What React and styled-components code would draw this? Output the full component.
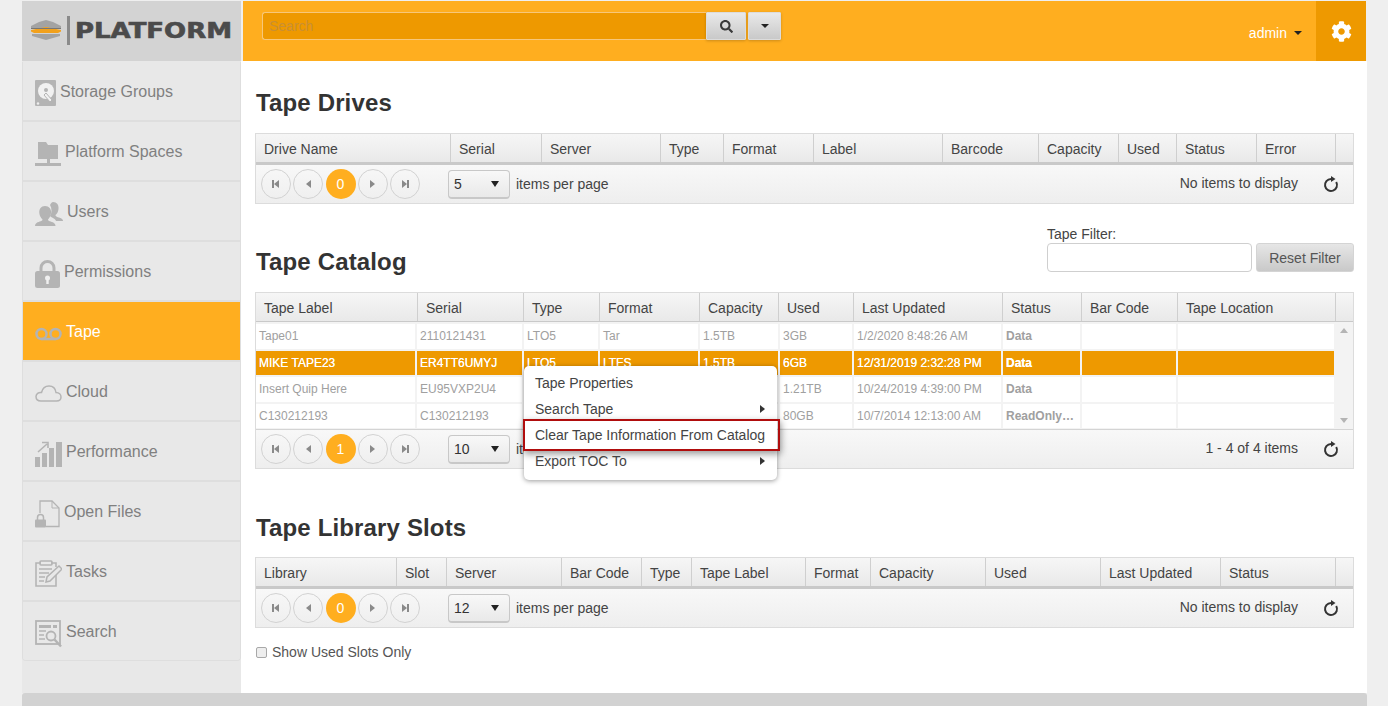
import React from "react";
import styled, { createGlobalStyle } from "styled-components";
import { FaSearch, FaCog } from "react-icons/fa";

const Global = createGlobalStyle`
  html, body { margin: 0; padding: 0; height: 100%; overflow: hidden; }
  body { background: #efefef; font-family: "Liberation Sans", Arial, sans-serif; color: #333; }
  * { box-sizing: border-box; }
`;

const Shell = styled.div`
  display: grid;
  grid-template-columns: 219px 1fr;
  grid-template-rows: 60px 632px 13px;
  width: 1345px;
  height: 706px;
  margin-left: 22px;
  padding-top: 1px;
`;
const LogoBar = styled.div`
  background: #d3d3d3;
  display: flex;
  align-items: center;
  padding-left: 7px;
`;
const TopBar = styled.header`
  margin: 0 1px 0 2px;
  background: #ffae1f;
  display: flex;
  align-items: flex-start;
  padding-left: 19px;
`;
const SearchInput = styled.input`
  width: 444px;
  height: 28px;
  margin-top: 11px;
  background: #ee9900;
  border: 1px solid #f7c77a;
  border-right: 0;
  border-radius: 3px 0 0 3px;
  padding: 0 6px;
  font: 14px "Liberation Sans", Arial, sans-serif;
  outline: none;
  &::placeholder { color: #c98f33; opacity: 1; }
`;
const BarButton = styled.button`
  width: ${(p) => p.$w}px;
  height: 28px;
  margin: 11px ${(p) => p.$mr || 0}px 0 0;
  padding: 0;
  border: 1px solid #dcdcdc;
  border-radius: 1px;
  background: linear-gradient(#e9e9e9, #c9c9c9);
  box-shadow: 0 1px 3px rgba(0, 0, 0, 0.2);
  display: flex;
  align-items: center;
  justify-content: center;
  color: #3a3a3a;
`;
const Caret = styled.span`
  display: inline-block;
  width: 0;
  height: 0;
  border-left: 4px solid transparent;
  border-right: 4px solid transparent;
  border-top: 4px solid ${(p) => p.$c || "#222"};
`;
const Spacer = styled.div`
  flex: 1;
`;
const UserMenu = styled.div`
  height: 60px;
  display: flex;
  align-items: center;
  gap: 7px;
  padding-top: 4px;
  margin-right: 14px;
  color: #fff;
  font-size: 14px;
`;
const GearBox = styled.div`
  width: 50px;
  height: 60px;
  background: #ee9900;
  color: #fff;
  display: flex;
  align-items: center;
  justify-content: center;
  padding-top: 1px;
  font-size: 21px;
`;

const Sidebar = styled.nav`
  background: #e8e8e8;
  padding-top: 1px;
`;
const NavList = styled.div`
  border: 1px solid #dedede;
  border-top: 0;
  border-radius: 0 0 4px 4px;
  overflow: hidden;
`;
const NavItem = styled.div`
  height: 60px;
  display: flex;
  align-items: center;
  gap: 4px;
  padding: 2px 0 0 12px;
  font-size: 16px;
  color: ${(p) => (p.$active ? "#fff" : "#808080")};
  background: ${(p) => (p.$active ? "#ffae1f" : "#e8e8e8")};
  border-bottom: 2px solid #dedede;
  &:last-child { border-bottom: 0; height: 58px; }
  svg { flex: none; margin-top: 3px; }
`;

const Main = styled.main`
  background: #fff;
  padding: 28px 13px 0 14px;
`;
const Title = styled.h2`
  margin: 0 0 0 1px;
  font-size: 24px;
  line-height: 28px;
  font-weight: 700;
  letter-spacing: 0.15px;
  color: #333;
`;
const Section = styled.section`
  margin-top: ${(p) => p.$mt || 0}px;
`;
const TitleRow = styled.div`
  display: flex;
  justify-content: space-between;
  align-items: flex-end;
`;
const Filter = styled.div`
  display: grid;
  grid-template-columns: 205px 98px;
  column-gap: 4px;
  margin-bottom: 4px;
  width: 307px;
`;
const FilterLabel = styled.label`
  grid-column: 1 / 3;
  font-size: 14px;
  line-height: 18px;
  color: #444;
`;
const FilterInput = styled.input`
  height: 29px;
  border: 1px solid #cfcfcf;
  border-radius: 4px;
  background: #fff;
`;
const ResetButton = styled.button`
  height: 29px;
  padding: 0;
  border: 1px solid #d4d4d4;
  border-radius: 3px;
  background: linear-gradient(#e6e6e6, #c9c9c9);
  font: 14px "Liberation Sans", Arial, sans-serif;
  color: #555;
`;
const Table = styled.div`
  position: relative;
  border: 1px solid #dcdcdc;
  margin-top: ${(p) => p.$mt}px;
`;
const HeaderRow = styled.div`
  display: grid;
  grid-template-columns: ${(p) => p.$cols};
  height: ${(p) => p.$h}px;
  background: linear-gradient(#f6f6f6, #e9e9e9);
  border-bottom: ${(p) => p.$bb}px solid #c9c9c9;
`;
const HeadCell = styled.div`
  padding-left: 8px;
  font-size: 14px;
  line-height: 31px;
  color: #444;
  white-space: nowrap;
  overflow: hidden;
  border-right: 1px solid #cfcfcf;
  &:last-child { border-right: 0; }
`;
const Body = styled.div`
  display: flex;
  height: 108px;
  background: #f3f3f3;
  border-bottom: 1px solid #d4d4d4;
`;
const Rows = styled.div`
  flex: 1;
  padding-top: 2px;
  display: grid;
  grid-auto-rows: 24.5px;
  row-gap: 2px;
`;
const Row = styled.div`
  display: grid;
  grid-template-columns: ${(p) => p.$cols};
  background: #f3f3f3;
`;
const Cell = styled.div`
  margin-right: 2px;
  padding-left: 3px;
  font-size: 12px;
  line-height: 24px;
  white-space: nowrap;
  overflow: hidden;
  text-overflow: ellipsis;
  font-weight: ${(p) => (p.$bold ? 700 : 400)};
  background: ${(p) => (p.$sel ? "#ee9900" : "#fff")};
  color: ${(p) => (p.$sel ? "#fff" : "#a0a0a0")};
  text-shadow: ${(p) => (p.$sel ? "0 0 0.3px #fff" : "none")};
  &:last-child { margin-right: 1px; }
`;
const Track = styled.div`
  width: 18px;
  display: flex;
  flex-direction: column;
  justify-content: space-between;
  align-items: center;
  padding: 6px 0 6px;
`;
const Arrow = styled.span`
  width: 0;
  height: 0;
  border-left: 4px solid transparent;
  border-right: 4px solid transparent;
  border-bottom: ${(p) => (p.$up ? "5px solid #b4b4b4" : "0")};
  border-top: ${(p) => (p.$up ? "0" : "5px solid #b4b4b4")};
`;
const Pager = styled.div`
  height: 38px;
  display: flex;
  align-items: center;
  background: linear-gradient(#f8f8f8, #eeeeee);
  padding-left: 5px;
  font-size: 14px;
`;
const PageButtons = styled.div`
  display: flex;
  gap: 2.25px;
  margin-right: 28px;
`;
const PageButton = styled.div`
  width: 30px;
  height: 30px;
  border-radius: 50%;
  border: ${(p) => (p.$active ? "0" : "1px solid #d2d2d2")};
  background: ${(p) => (p.$active ? "#ffae1f" : "transparent")};
  color: #fff;
  display: flex;
  align-items: center;
  justify-content: center;
  font-size: 14px;
`;
const SelectBox = styled.div`
  width: 62px;
  height: 29px;
  border: 1px solid #c8c8c8;
  border-bottom-width: 2px;
  border-radius: 4px;
  background: linear-gradient(#f8f8f8, #e9e9e9);
  display: flex;
  align-items: center;
  justify-content: space-between;
  padding: 0 10px 0 5px;
  color: #333;
`;
const SelectCaret = styled.span`
  width: 0;
  height: 0;
  border-left: 4.5px solid transparent;
  border-right: 4.5px solid transparent;
  border-top: 6px solid #222;
`;
const PerPage = styled.span`
  margin-left: 6px;
  color: #444;
`;
const Info = styled.span`
  font-size: 14px;
  color: #444;
  margin-right: 25px;
  padding-bottom: 3px;
`;
const RefreshWrap = styled.span`
  display: flex;
  margin-right: 14px;
`;
const Menu = styled.div`
  position: absolute;
  left: 268px;
  top: 73px;
  width: 253px;
  height: 114px;
  z-index: 5;
  background: #fff;
  border-radius: 5px;
  box-shadow: 0 1px 5px rgba(0, 0, 0, 0.4);
  padding-top: 4px;
`;
const MenuItem = styled.div`
  position: relative;
  height: 26px;
  line-height: 25px;
  padding: 0 12px 0 11px;
  font-size: 14px;
  color: #444;
  white-space: nowrap;
  display: flex;
  align-items: center;
  justify-content: space-between;
  ${(p) =>
    p.$hl &&
    `&::after {
      content: "";
      position: absolute;
      left: -1px; right: -3px; top: -3px; bottom: -3px;
      border: 2px solid #b00d0d;
      box-shadow: 1px 3px 7px rgba(0,0,0,.4);
    }`}
`;
const SubArrow = styled.span`
  width: 0;
  height: 0;
  border-top: 4px solid transparent;
  border-bottom: 4px solid transparent;
  border-left: 5px solid #333;
`;
const CheckRow = styled.label`
  display: flex;
  align-items: center;
  gap: 5px;
  margin: 15px 0 0 1px;
  font-size: 14px;
  line-height: 18px;
  color: #555;
`;
const CheckBox = styled.span`
  width: 11px;
  height: 11px;
  border: 1px solid #a8a8a8;
  border-radius: 2px;
  background: #eee;
`;
const Footer = styled.footer`
  grid-column: 1 / 3;
  background: #d2d2d2;
  border-radius: 3px 3px 0 0;
`;

const G = "#b4b4b4";

const Logo = () => (
  <svg width="205" height="32" viewBox="0 0 205 32">
    <path d="M2 11 L10 7 L17 5 L24 7 L32 11 L32 13 L2 13Z" fill="#a3a3a3" />
    <path d="M2 15 L17 12 L32 15 V16.500 L29 18 H5 L2 16.500Z" fill="#f2a11c" />
    <path d="M2 13 H32 V14 H2Z" fill="#777" />
    <path d="M3 19 H31 V21 L17 25 L3 21Z" fill="#a3a3a3" />
    <rect x="38" y="1" width="3" height="29" fill="#8a8a8a" />
    <text x="46" y="23" fontFamily="'DejaVu Sans', sans-serif" fontWeight="700" fontSize="20.5" fill="#4b4b4b" textLength="157" lengthAdjust="spacingAndGlyphs" stroke="#4b4b4b" strokeWidth="0.6">PLATFORM</text>
  </svg>
);

const IconDisk = () => (
  <svg width="21" height="27" viewBox="0 0 21 27">
    <rect width="21" height="26" rx="1" fill={G} />
    <circle cx="11" cy="11" r="8" fill="#f1f1f1" />
    <circle cx="11" cy="10" r="2" fill={G} />
    <path d="M11 13 l6 7 l-2 2 l-6 -7z" fill="#f1f1f1" stroke={G} strokeWidth="1" />
    <circle cx="3" cy="23.5" r="1.2" fill="#eee" />
  </svg>
);
const IconFolder = () => (
  <svg width="26" height="26" viewBox="0 0 26 26">
    <path d="M3 1 h8 l2 3 h10 v14 H3z" fill={G} />
    <rect x="12" y="18" width="3" height="4" fill={G} />
    <rect x="0" y="22" width="26" height="3" fill={G} />
  </svg>
);
const IconUsers = () => (
  <svg width="28" height="24" viewBox="0 0 28 24">
    <path d="M18 0 c4 0 6 3 5.500 7 c-.3 3 -1.500 5 -3 6 c0 2 3 2 5 3 c2 1 2.500 2 2.500 3 h-7 c-1 -3 -4 -3 -6 -5 c2 -3 2 -8 0 -11 c1 -2 2 -3 3 -3z" fill={G} />
    <path d="M10 4 c4 0 6.500 3 6 7 c-.3 3 -1.500 5 -3 6.500 c0 2 3 1.500 6 3.500 c1 .8 1.500 2 1.500 3 H0 c0 -1.200 .5 -2.200 1.500 -3 c3 -2 6 -1.500 6 -3.500 C6 16 4.500 14 4.300 11 C4 7 6 4 10 4z" fill={G} />
  </svg>
);
const IconLock = () => (
  <svg width="25" height="28" viewBox="0 0 25 28">
    <path d="M6 13 V8 a6.500 6.500 0 0 1 13 0 V13" fill="none" stroke={G} strokeWidth="3" />
    <rect y="11" width="25" height="17" rx="2.500" fill={G} />
    <circle cx="12.500" cy="18" r="2.500" fill="#f0f0f0" />
    <rect x="11.300" y="18" width="2.400" height="6" fill="#f0f0f0" />
  </svg>
);
const IconTape = () => (
  <svg width="27" height="14" viewBox="0 0 27 14">
    <circle cx="6.500" cy="7" r="5" fill="none" stroke={G} strokeWidth="2.500" />
    <circle cx="20.500" cy="7" r="5" fill="none" stroke={G} strokeWidth="2.500" />
    <rect x="6.500" y="10.800" width="14" height="2.500" fill={G} />
  </svg>
);
const IconCloud = () => (
  <svg width="27" height="17" viewBox="0 0 27 17">
    <path d="M6 16 C2.500 16 1 14 1 11.500 C1 9 3.500 7 6.500 7.500 C7.500 3.500 10.500 1 14 1 C18 1 20.500 4 21 7.500 C24 7.500 26 9.500 26 12 C26 14.500 24 16 21.500 16Z" fill="none" stroke={G} strokeWidth="1.500" />
  </svg>
);
const IconPerf = () => (
  <svg width="27" height="26" viewBox="0 0 27 26">
    <rect x="0" y="16" width="5" height="10" fill={G} />
    <rect x="7" y="12" width="5" height="14" fill={G} />
    <rect x="14" y="7" width="5" height="19" fill={G} />
    <rect x="21" y="1" width="6" height="25" fill={G} />
    <path d="M3 11 L12 3 M7 1.500 h6 v5.500" fill="none" stroke={G} strokeWidth="1.600" />
  </svg>
);
const IconFile = () => (
  <svg width="25" height="28" viewBox="0 0 25 28">
    <path d="M5 13 V1 h12 l7 7 v18.500 h-13" fill="none" stroke={G} strokeWidth="1.300" />
    <path d="M17 1 v7 h7" fill="none" stroke={G} strokeWidth="1" />
    <path d="M2.500 20 v-2.500 a3 3 0 0 1 6 0 v2.500" fill="none" stroke={G} strokeWidth="1.500" />
    <rect x="0" y="19.500" width="11" height="8" rx="1" fill={G} />
  </svg>
);
const IconTasks = () => (
  <svg width="27" height="27" viewBox="0 0 27 27">
    <path d="M6 3 H1 v23 h20 V15" fill="none" stroke={G} strokeWidth="1.600" />
    <path d="M21 7 V3 h-5" fill="none" stroke={G} strokeWidth="1.600" />
    <rect x="5" y="1" width="12" height="4" rx="1" fill="none" stroke={G} strokeWidth="1.600" />
    <path d="M4 9 h13 M4 13 h10 M4 17 h6 M4 21 h5" stroke={G} strokeWidth="1.500" />
    <path d="M11 22 l1 -5 L24 6 l3 3 L15 21z" fill="#e8e8e8" stroke={G} strokeWidth="1.500" />
  </svg>
);
const IconSearchDoc = () => (
  <svg width="27" height="28" viewBox="0 0 27 28">
    <rect x="1" y="1" width="24" height="23" fill="none" stroke={G} strokeWidth="1.800" />
    <rect x="4" y="5" width="12" height="3" fill={G} />
    <rect x="18" y="5" width="4" height="3" fill={G} />
    <path d="M4 11 h7 M4 15 h5 M4 19 h6" stroke={G} strokeWidth="1.500" />
    <circle cx="16" cy="16" r="4.500" fill="#e8e8e8" stroke={G} strokeWidth="1.800" />
    <path d="M19.500 19.500 L26 26.500" stroke={G} strokeWidth="2.500" />
  </svg>
);

const nav = [
  ["Storage Groups", IconDisk],
  ["Platform Spaces", IconFolder],
  ["Users", IconUsers],
  ["Permissions", IconLock],
  ["Tape", IconTape, true],
  ["Cloud", IconCloud],
  ["Performance", IconPerf],
  ["Open Files", IconFile],
  ["Tasks", IconTasks],
  ["Search", IconSearchDoc],
];

const PageIcon = ({ kind }) => {
  const bar = kind === "first" || kind === "last";
  const left = kind === "first" || kind === "prev";
  return (
    <svg width="10" height="10" viewBox="0 0 10 10">
      {left ? <path d="M8 1 v8 L3 5z" fill="#8a8a8a" /> : <path d="M2 1 v8 L7 5z" fill="#8a8a8a" />}
      {bar && (left ? <rect x="1" y="1" width="2" height="8" fill="#8a8a8a" /> : <rect x="7" y="1" width="2" height="8" fill="#8a8a8a" />)}
    </svg>
  );
};

const Refresh = () => (
  <svg width="16" height="17" viewBox="0 0 16 17">
    <path d="M13.200 6 A6 6 0 1 1 8 3" fill="none" stroke="#333" strokeWidth="2" />
    <path d="M8 0 L12.500 3 L8 6z" fill="#333" />
  </svg>
);

const TablePager = ({ page, size, info }) => (
  <Pager>
    <PageButtons>
      <PageButton><PageIcon kind="first" /></PageButton>
      <PageButton><PageIcon kind="prev" /></PageButton>
      <PageButton $active>{page}</PageButton>
      <PageButton><PageIcon kind="next" /></PageButton>
      <PageButton><PageIcon kind="last" /></PageButton>
    </PageButtons>
    <SelectBox>{size}<SelectCaret /></SelectBox>
    <PerPage>items per page</PerPage>
    <Spacer />
    <Info>{info}</Info>
    <RefreshWrap><Refresh /></RefreshWrap>
  </Pager>
);

const px = (a) => a.map((n) => n + "px").join(" ");
const drivesCols = px([195, 91, 119, 63, 90, 129, 96, 80, 58, 80, 79]) + " 1fr";
const catCols = px([162, 106, 76, 100, 79, 75, 149, 79, 96, 158]) + " 1fr";
const catBody = px([161, 107, 76, 100, 80, 74, 149, 79, 96, 157]);
const slotCols = px([141, 50, 115, 80, 50, 114, 65, 115, 115, 120, 115]) + " 1fr";

const drives = ["Drive Name", "Serial", "Server", "Type", "Format", "Label", "Barcode", "Capacity", "Used", "Status", "Error", ""];
const catalog = ["Tape Label", "Serial", "Type", "Format", "Capacity", "Used", "Last Updated", "Status", "Bar Code", "Tape Location", ""];
const slots = ["Library", "Slot", "Server", "Bar Code", "Type", "Tape Label", "Format", "Capacity", "Used", "Last Updated", "Status", ""];

const rows = [
  ["Tape01", "2110121431", "LTO5", "Tar", "1.5TB", "3GB", "1/2/2020 8:48:26 AM", "Data", "", ""],
  ["MIKE TAPE23", "ER4TT6UMYJ", "LTO5", "LTFS", "1.5TB", "6GB", "12/31/2019 2:32:28 PM", "Data", "", ""],
  ["Insert Quip Here", "EU95VXP2U4", "LTO5", "LTFS", "1.5TB", "1.21TB", "10/24/2019 4:39:00 PM", "Data", "", ""],
  ["C130212193", "C130212193", "LTO5", "LTFS", "1.5TB", "80GB", "10/7/2014 12:13:00 AM", "ReadOnlyMedia", "", ""],
];

export default function App() {
  return (
    <>
      <Global />
      <Shell>
        <LogoBar><Logo /></LogoBar>
        <TopBar>
          <SearchInput placeholder="Search" />
          <BarButton $w={40} $mr={2}><FaSearch size={13} /></BarButton>
          <BarButton $w={33}><Caret /></BarButton>
          <Spacer />
          <UserMenu>admin <Caret /></UserMenu>
          <GearBox><FaCog /></GearBox>
        </TopBar>
        <Sidebar>
          <NavList>
            {nav.map(([label, Icon, active]) => (
              <NavItem key={label} $active={active}>
                <Icon />
                {label}
              </NavItem>
            ))}
          </NavList>
        </Sidebar>
        <Main>
          <Section>
            <Title>Tape Drives</Title>
            <Table $mt={16}>
              <HeaderRow $cols={drivesCols} $h={31} $bb={3}>
                {drives.map((h, i) => <HeadCell key={i}>{h}</HeadCell>)}
              </HeaderRow>
              <TablePager page={0} size={5} info="No items to display" />
            </Table>
          </Section>
          <Section $mt={21}>
            <TitleRow>
              <Title>Tape Catalog</Title>
              <Filter>
                <FilterLabel>Tape Filter:</FilterLabel>
                <FilterInput />
                <ResetButton>Reset Filter</ResetButton>
              </Filter>
            </TitleRow>
            <Table $mt={16}>
              <HeaderRow $cols={catCols} $h={29} $bb={1}>
                {catalog.map((h, i) => <HeadCell key={i}>{h}</HeadCell>)}
              </HeaderRow>
              <Body>
                <Rows>
                  {rows.map((r, i) => (
                    <Row key={i} $cols={catBody}>
                      {r.map((c, j) => (
                        <Cell key={j} $sel={i === 1} $bold={j === 7}>{c}</Cell>
                      ))}
                    </Row>
                  ))}
                </Rows>
                <Track><Arrow $up /><Arrow /></Track>
              </Body>
              <TablePager page={1} size={10} info="1 - 4 of 4 items" />
              <Menu>
                <MenuItem>Tape Properties</MenuItem>
                <MenuItem>Search Tape<SubArrow /></MenuItem>
                <MenuItem $hl>Clear Tape Information From Catalog</MenuItem>
                <MenuItem>Export TOC To<SubArrow /></MenuItem>
              </Menu>
            </Table>
          </Section>
          <Section $mt={45}>
            <Title>Tape Library Slots</Title>
            <Table $mt={15}>
              <HeaderRow $cols={slotCols} $h={31} $bb={3}>
                {slots.map((h, i) => <HeadCell key={i}>{h}</HeadCell>)}
              </HeaderRow>
              <TablePager page={0} size={12} info="No items to display" />
            </Table>
            <CheckRow><CheckBox />Show Used Slots Only</CheckRow>
          </Section>
        </Main>
        <Footer />
      </Shell>
    </>
  );
}
